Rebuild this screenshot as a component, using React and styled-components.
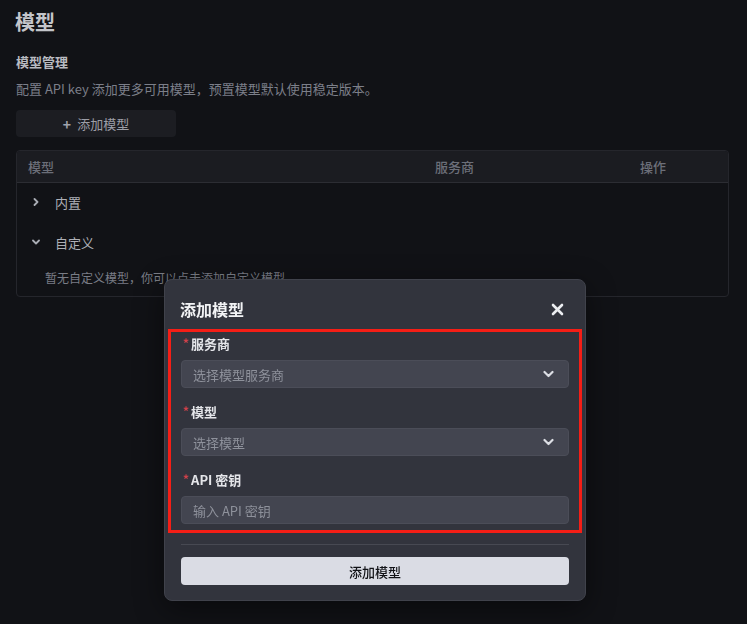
import React from "react";
import styled, { createGlobalStyle } from "styled-components";

const Global = createGlobalStyle`
  html, body {
    margin: 0;
    padding: 0;
    background: #111216;
  }
  body {
    font-family: "Noto Sans CJK SC", "Noto Sans", sans-serif;
    -webkit-font-smoothing: antialiased;
  }
`;

const Page = styled.div`
  min-height: 624px;
  box-sizing: border-box;
  padding: 8px 18px 0 16px;
  background: #111216;
`;

const Title = styled.h1`
  margin: 0 0 0 -1px;
  font-size: 20px;
  line-height: 28px;
  font-weight: 700;
  color: #c4c5ca;
`;

const Section = styled.h2`
  margin: 16px 0 0;
  font-size: 13px;
  line-height: 20px;
  font-weight: 700;
  color: #b9bbc1;
`;

const Desc = styled.p`
  margin: 7px 0 0;
  font-size: 13px;
  line-height: 20px;
  color: #7c7f89;
`;

const GhostButton = styled.button`
  margin-top: 11px;
  width: 160px;
  height: 27px;
  border: none;
  border-radius: 4px;
  background: #1c1d22;
  color: #9c9ea7;
  font-family: inherit;
  font-size: 13px;
  display: flex;
  align-items: center;
  justify-content: center;
  gap: 6px;
  padding: 0;
`;

const Plus = styled.span`
  font-size: 14px;
  font-weight: 700;
  color: #a0a3ab;
  line-height: 1;
`;

const Table = styled.div`
  margin-top: 13px;
  border: 1px solid #25262c;
  border-radius: 4px;
  overflow: hidden;
`;

const HeadRow = styled.div`
  display: grid;
  grid-template-columns: 1fr 205px 99px;
  height: 31px;
  align-items: center;
  background: #1b1c21;
  border-bottom: 1px solid #2c2d33;
`;

const HeadCell = styled.div`
  padding-left: 11px;
  font-size: 13px;
  font-weight: 500;
  color: #6c6f79;
`;

const GroupRow = styled.div`
  display: flex;
  align-items: center;
  height: 40px;
  box-sizing: border-box;
  padding: 0 0 2px 15px;
  gap: 15px;
  font-size: 13px;
  color: #aeb0b7;
`;

const Chevron = styled.svg`
  width: 8px;
  height: 8px;
  flex: none;
`;

const EmptyText = styled.div`
  padding: 6px 0 0 28px;
  height: 27px;
  font-size: 12px;
  line-height: 18px;
  color: #7a7d86;
`;

const Dialog = styled.div`
  position: fixed;
  left: 164px;
  top: 279px;
  width: 422px;
  box-sizing: border-box;
  padding: 0 16px 15px;
  background: #32343d;
  border: 1px solid #40424b;
  border-radius: 8px;
  box-shadow: 0 8px 30px rgba(0, 0, 0, 0.45);
`;

const DialogHeader = styled.div`
  display: flex;
  align-items: center;
  justify-content: space-between;
  padding-top: 18px;
  height: 22px;
  margin-bottom: 9px;
`;

const DialogTitle = styled.h3`
  margin: 0 0 0 -1px;
  font-size: 16px;
  line-height: 22px;
  font-weight: 700;
  color: #f2f3f5;
`;

const CloseButton = styled.button`
  border: none;
  background: none;
  padding: 0;
  margin-right: 5px;
  width: 14px;
  height: 14px;
  display: flex;
  align-items: center;
  justify-content: center;
`;

const Highlight = styled.div`
  margin: 0 -13px;
  border: 3px solid #f51e16;
  padding: 2px 10px 6px;
  display: flex;
  flex-direction: column;
  gap: 14px;
`;

const Field = styled.div`
  display: flex;
  flex-direction: column;
  gap: 6px;
`;

const Label = styled.label`
  display: flex;
  align-items: center;
  font-size: 13px;
  line-height: 20px;
  font-weight: 600;
  color: #e4e5e9;
  padding-left: 2px;
`;

const Star = styled.span`
  color: #d0414a;
  font-size: 12px;
  margin-right: 2px;
  transform: translateY(-1px);
`;

const Control = styled.div`
  height: 28px;
  box-sizing: border-box;
  display: flex;
  align-items: center;
  justify-content: space-between;
  padding: 0 14px 0 11px;
  border: 1px solid #4b4d58;
  border-radius: 4px;
  background: #434550;
  font-size: 13px;
  color: #8e919b;
`;

const Divider = styled.div`
  margin-top: 11px;
  height: 1px;
  background: #474952;
`;

const PrimaryButton = styled.button`
  margin-top: 12px;
  width: 100%;
  height: 28px;
  border: none;
  border-radius: 4px;
  background: #dadce4;
  color: #111216;
  font-family: inherit;
  font-size: 13px;
  font-weight: 500;
  padding: 0;
`;

const ChevronDown = () => (
  <Chevron viewBox="0 0 8 8">
    <path d="M1 2.5 L4 5.5 L7 2.5" fill="none" stroke="currentColor" strokeWidth="1.8" strokeLinecap="round" strokeLinejoin="round" />
  </Chevron>
);

const ChevronRight = () => (
  <Chevron viewBox="0 0 8 8">
    <path d="M2.5 1 L5.5 4 L2.5 7" fill="none" stroke="currentColor" strokeWidth="1.8" strokeLinecap="round" strokeLinejoin="round" />
  </Chevron>
);

const SelectArrow = styled.svg`
  width: 11px;
  height: 8px;
  color: #dcdee4;
`;

const Arrow = () => (
  <SelectArrow viewBox="0 0 11 8">
    <path d="M1.5 2 L5.5 6 L9.5 2" fill="none" stroke="currentColor" strokeWidth="2.2" strokeLinecap="round" strokeLinejoin="round" />
  </SelectArrow>
);

const GroupIcon = styled.span`
  color: #a9acb4;
  display: flex;
`;

export default function App() {
  return (
    <>
      <Global />
      <Page>
        <Title>模型</Title>
        <Section>模型管理</Section>
        <Desc>配置 API key 添加更多可用模型，预置模型默认使用稳定版本。</Desc>
        <GhostButton>
          <Plus>+</Plus>
          添加模型
        </GhostButton>
        <Table>
          <HeadRow>
            <HeadCell>模型</HeadCell>
            <HeadCell>服务商</HeadCell>
            <HeadCell>操作</HeadCell>
          </HeadRow>
          <GroupRow>
            <GroupIcon><ChevronRight /></GroupIcon>
            内置
          </GroupRow>
          <GroupRow>
            <GroupIcon><ChevronDown /></GroupIcon>
            自定义
          </GroupRow>
          <EmptyText>暂无自定义模型，你可以点击添加自定义模型。</EmptyText>
        </Table>
      </Page>

      <Dialog role="dialog">
        <DialogHeader>
          <DialogTitle>添加模型</DialogTitle>
          <CloseButton aria-label="close">
            <svg width="13" height="13" viewBox="0 0 13 13">
              <path d="M2 2 L11 11 M11 2 L2 11" stroke="#eceef1" strokeWidth="2.6" strokeLinecap="round" />
            </svg>
          </CloseButton>
        </DialogHeader>
        <Highlight>
          <Field>
            <Label><Star>*</Star>服务商</Label>
            <Control>
              选择模型服务商
              <Arrow />
            </Control>
          </Field>
          <Field>
            <Label><Star>*</Star>模型</Label>
            <Control>
              选择模型
              <Arrow />
            </Control>
          </Field>
          <Field>
            <Label><Star>*</Star>API 密钥</Label>
            <Control>输入 API 密钥</Control>
          </Field>
        </Highlight>
        <Divider />
        <PrimaryButton>添加模型</PrimaryButton>
      </Dialog>
    </>
  );
}
